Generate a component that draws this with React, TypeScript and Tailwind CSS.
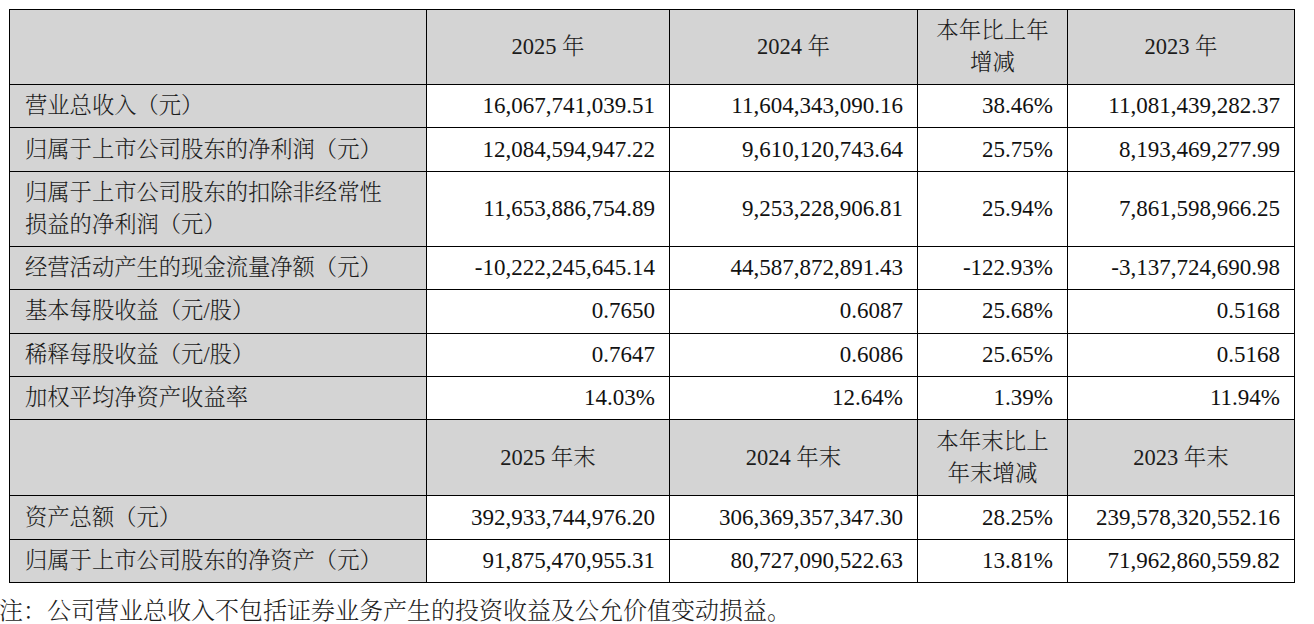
import React from "react";

const FONT = {
  fontFamily:
    '"Liberation Serif", "Noto Serif CJK SC", "Noto Sans CJK SC", serif',
};

type Row = { label: React.ReactNode; vals: string[]; tall?: boolean };

const rows1: Row[] = [
  { label: "营业总收入（元）", vals: ["16,067,741,039.51", "11,604,343,090.16", "38.46%", "11,081,439,282.37"] },
  { label: "归属于上市公司股东的净利润（元）", vals: ["12,084,594,947.22", "9,610,120,743.64", "25.75%", "8,193,469,277.99"] },
  {
    label: (
      <>
        归属于上市公司股东的扣除非经常性
        <br />
        损益的净利润（元）
      </>
    ),
    vals: ["11,653,886,754.89", "9,253,228,906.81", "25.94%", "7,861,598,966.25"],
    tall: true,
  },
  { label: "经营活动产生的现金流量净额（元）", vals: ["-10,222,245,645.14", "44,587,872,891.43", "-122.93%", "-3,137,724,690.98"] },
  { label: "基本每股收益（元/股）", vals: ["0.7650", "0.6087", "25.68%", "0.5168"] },
  { label: "稀释每股收益（元/股）", vals: ["0.7647", "0.6086", "25.65%", "0.5168"] },
  { label: "加权平均净资产收益率", vals: ["14.03%", "12.64%", "1.39%", "11.94%"] },
];

const rows2: Row[] = [
  { label: "资产总额（元）", vals: ["392,933,744,976.20", "306,369,357,347.30", "28.25%", "239,578,320,552.16"] },
  { label: "归属于上市公司股东的净资产（元）", vals: ["91,875,470,955.31", "80,727,090,522.63", "13.81%", "71,962,860,559.82"] },
];

function HeaderRow({ cols, height }: { cols: React.ReactNode[]; height: string }) {
  return (
    <tr className={height}>
      <td className="border border-black bg-[#d4d4d4]"></td>
      {cols.map((c, i) => (
        <td
          key={i}
          className="border border-black bg-[#d4d4d4] text-center align-middle text-[22.5px] leading-[32px] font-light text-[#1c1c1c]"
        >
          {c}
        </td>
      ))}
    </tr>
  );
}

function DataRow({ row }: { row: Row }) {
  return (
    <tr className={row.tall ? "h-[75px]" : "h-[43.4px]"}>
      <td className="border border-black bg-[#d4d4d4] pl-[15px] text-left align-middle text-[22.3px] leading-[32px] font-light text-[#1c1c1c] whitespace-nowrap">
        {row.label}
      </td>
      {row.vals.map((v, i) => (
        <td
          key={i}
          className="border border-black bg-white pr-[14px] text-right align-middle text-[23px] leading-[32px] text-[#111111] whitespace-nowrap"
        >
          {v}
        </td>
      ))}
    </tr>
  );
}

export default function App() {
  return (
    <div className="w-[1314px] h-[624px] bg-white overflow-hidden" style={FONT}>
      <div className="pl-[9px] pt-[9px]">
        <table className="table-fixed border-collapse w-[1285px]">
          <colgroup>
            <col className="w-[417px]" />
            <col className="w-[243px]" />
            <col className="w-[248px]" />
            <col className="w-[150px]" />
            <col className="w-[227px]" />
          </colgroup>
          <tbody>
            <HeaderRow
              height="h-[75px]"
              cols={[
                "2025 年",
                "2024 年",
                <>
                  本年比上年
                  <br />
                  增减
                </>,
                "2023 年",
              ]}
            />
            {rows1.map((r, i) => (
              <DataRow key={i} row={r} />
            ))}
            <HeaderRow
              height="h-[76px]"
              cols={[
                "2025 年末",
                "2024 年末",
                <>
                  本年末比上
                  <br />
                  年末增减
                </>,
                "2023 年末",
              ]}
            />
            {rows2.map((r, i) => (
              <DataRow key={i} row={r} />
            ))}
          </tbody>
        </table>
      </div>
      <div className="ml-[-1px] mt-[13px] text-[24px] leading-[30px] font-light text-[#1c1c1c] whitespace-nowrap">
        注：公司营业总收入不包括证券业务产生的投资收益及公允价值变动损益。
      </div>
    </div>
  );
}
